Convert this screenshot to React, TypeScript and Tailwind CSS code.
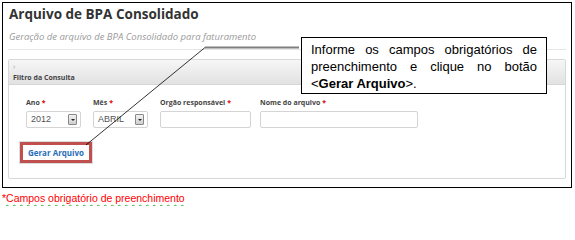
import React from 'react'

const pageFont = { fontFamily: '"Open Sans", "Liberation Sans", sans-serif' }

function Req() {
  return <span className="text-[#e00000] ml-[2px]">*</span>
}

function SelectBox({ value }: { value: string }) {
  return (
    <div className="flex items-center justify-between w-[55px] h-[17px] border border-[#d4d4d4] rounded-[2px] bg-white pl-[4px] pr-[3px]">
      <span className="text-[9px] text-[#555]" style={{ fontFamily: '"Liberation Sans", sans-serif' }}>{value}</span>
      <span className="flex items-center justify-center w-[9px] h-[11px] border border-[#888] rounded-[1px] bg-gradient-to-b from-[#f2f2f2] to-[#cfcfcf]">
        <span className="w-0 h-0 border-l-[2px] border-r-[2px] border-t-[2px] border-l-transparent border-r-transparent border-t-[#222]" />
      </span>
    </div>
  )
}

function Field({ label, className, children }: { label: string; className?: string; children: React.ReactNode }) {
  return (
    <div className={`flex flex-col gap-[3px] ${className ?? ''}`}>
      <span className="text-[7px] font-bold text-[#444] leading-[10px]">
        {label}
        <Req />
      </span>
      {children}
    </div>
  )
}

export default function App() {
  return (
    <div className="relative w-[575px] h-[206px] bg-white overflow-hidden" style={pageFont}>
      <div className="ml-[2px] mt-[2px] w-[570px] h-[186px] border border-black px-[5px]">
        <h1 className="text-[13.5px] font-bold text-[#333] leading-[22px] pl-[1px]">
          Arquivo de BPA Consolidado
        </h1>
        <p className="mt-[5px] text-[9.5px] italic text-[#9a9a9a] leading-[14px] pl-[1px]">
          Geração de arquivo de BPA Consolidado para faturamento
        </p>
        <div className="mt-[5px] border-t border-[#e6e6e6]" />
        <div className="mt-[9px] h-[120px] border border-[#d8d8d8] rounded-[2px] flex flex-col">
          <div className="h-[25px] shrink-0 bg-gradient-to-b from-[#f6f6f6] to-[#e2e2e2] border-b border-[#d6d6d6] px-[4px] flex flex-col">
            <span className="text-[8px] text-[#aaa] leading-[9px] mt-[1px]">›</span>
            <span className="text-[7px] font-bold text-[#444] leading-[10px] mt-[3px]">Filtro da Consulta</span>
          </div>
          <div className="flex gap-[12px] pl-[17px] mt-[13px]">
            <Field label="Ano">
              <SelectBox value="2012" />
            </Field>
            <Field label="Mês">
              <SelectBox value="ABRIL" />
            </Field>
            <Field label="Orgão responsável">
              <div className="w-[91px] h-[17px] border border-[#d4d4d4] rounded-[2px] bg-white" />
            </Field>
            <Field label="Nome do arquivo" className="-ml-[3px]">
              <div className="w-[158px] h-[17px] border border-[#d4d4d4] rounded-[2px] bg-white" />
            </Field>
          </div>
          <div className="ml-[11px] mt-[14px] w-[72px] h-[21px] border-[3px] border-[#c0504d] bg-white flex items-center justify-center outline outline-1 outline-[#dcdcdc]">
            <span className="text-[8px] font-bold text-[#2a6ebb]">Gerar Arquivo</span>
          </div>
        </div>
      </div>
      <p
        className="ml-[2px] mt-[3px] text-[10.5px] text-[#ff0000] leading-[14px] underline decoration-wavy decoration-[#3cb043] underline-offset-[2px]"
        style={{ fontFamily: '"Liberation Sans", sans-serif', textDecorationThickness: '1px' }}
      >
        *Campos obrigatório de preenchimento
      </p>

      <svg className="absolute left-0 top-0 pointer-events-none" width="575" height="206">
        <line x1="205" y1="47.5" x2="299" y2="47.5" stroke="#7f7f7f" strokeWidth="2" />
        <line x1="205" y1="47.5" x2="86" y2="145" stroke="#000" strokeWidth="0.8" />
      </svg>
      <div
        className="absolute left-[301px] top-[37px] w-[246px] h-[57px] border border-black bg-white px-[9px] pt-[3px] text-[13px] leading-[17px] text-black text-justify"
        style={{ fontFamily: '"Liberation Sans", Arial, sans-serif', textAlignLast: 'left' }}
      >
        Informe os campos obrigatórios de preenchimento e clique no botão &lt;<b>Gerar Arquivo</b>&gt;.
      </div>
    </div>
  )
}
